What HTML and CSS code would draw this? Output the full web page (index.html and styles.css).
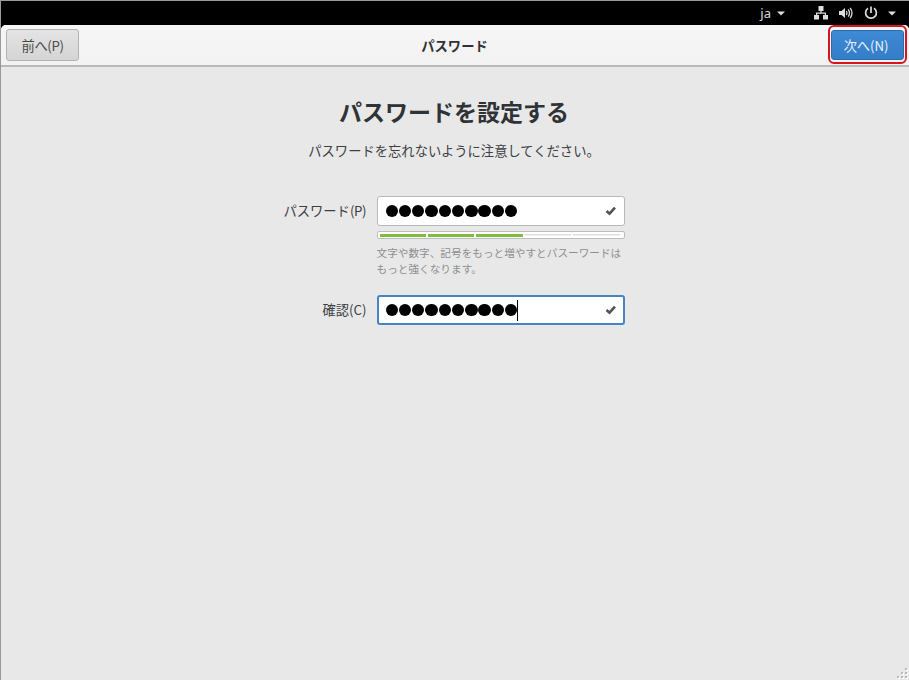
FILE: index.html
```html
<!DOCTYPE html>
<html lang="ja">
<head>
<meta charset="utf-8">
<title>パスワード</title>
<link rel="stylesheet" href="styles.css">
</head>
<body>
<div class="screen">
  <div class="topbar">
    <span class="lang">ja</span>
    <svg class="arrow" width="8" height="5" viewBox="0 0 8 5"><path d="M0 .5h8L4 4.500z"/></svg>
    <svg class="network" width="14" height="14" viewBox="0 0 14 14"><path d="M4.500 0h5v5H7.600v1.500H12V9h2v4.500H9V9h1.800V7.700H3.200V9H5v4.500H0V9h2V6.500h4.400V5H4.500z"/></svg>
    <svg class="volume" width="14" height="14" viewBox="0 0 14 14"><path d="M0 5h2.500L6 2v10L2.500 9H0z"/><path class="wave" d="M7.300 5q1.300 2 0 4M9.200 3.300q2.600 3.700 0 7.400M11.200 1.800q3.600 5.200 0 10.400"/></svg>
    <svg class="power" width="14" height="14" viewBox="0 0 14 14"><path d="M4 2.300a5.400 5.400 0 1 0 6 0M7 .5V7"/></svg>
    <svg class="arrow" width="8" height="5" viewBox="0 0 8 5"><path d="M0 .5h8L4 4.500z"/></svg>
  </div>
  <div class="window">
    <header class="header">
      <button class="button">前へ(P)</button>
      <div class="title">パスワード</div>
      <div class="highlight"><button class="button primary">次へ(N)</button></div>
    </header>
    <main class="content">
      <h1>パスワードを設定する</h1>
      <p class="subtitle">パスワードを忘れないように注意してください。</p>
      <div class="form">
        <label>パスワード<span class="latin">(P)</span></label>
        <div class="entry">
          <span class="dots"><i></i><i></i><i></i><i></i><i></i><i></i><i></i><i></i><i></i><i></i></span>
          <svg class="check" width="12" height="10" viewBox="0 0 12 10"><path d="M1.500 5l3 2.700L10 1.700"/></svg>
        </div>
        <div class="strength"><i class="on"></i><i class="on"></i><i class="on"></i><i></i><i></i></div>
        <p class="hint">文字や数字、記号をもっと増やすとパスーワードは<br>もっと強くなります。</p>
        <label class="confirm">確認(C)</label>
        <div class="entry confirm focused">
          <span class="dots"><i></i><i></i><i></i><i></i><i></i><i></i><i></i><i></i><i></i><i></i></span><span class="caret"></span>
          <svg class="check" width="12" height="10" viewBox="0 0 12 10"><path d="M1.500 5l3 2.700L10 1.700"/></svg>
        </div>
      </div>
    </main>
    <svg class="grip" width="12" height="12" viewBox="0 0 12 12"><path class="light" d="M9 1h2v2H9zM5 5h2v2H5zM9 5h2v2H9zM1 9h2v2H1zM5 9h2v2H5zM9 9h2v2H9z"/><path d="M8 0h2v2H8zM4 4h2v2H4zM8 4h2v2H8zM0 8h2v2H0zM4 8h2v2H4zM8 8h2v2H8z"/></svg>
  </div>
</div>
</body>
</html>
```
FILE: styles.css
```css
* { box-sizing: border-box; }
body {
  margin: 0;
  font: 13.300px/20px "Noto Sans CJK JP", sans-serif;
  color: #3c4043;
}
.screen {
  width: 909px;
  height: 680px;
  display: flex;
  flex-direction: column;
  background: #000;
  border-top: 1px solid #999;
  border-left: 1px solid #999;
  overflow: hidden;
}
.topbar {
  height: 24px;
  display: flex;
  align-items: center;
  justify-content: flex-end;
  padding-right: 13px;
  color: #ddd;
  fill: #ddd;
}
.lang { margin-right: 6px; font-family: "Noto Sans", sans-serif; font-size: 13px; }
.network { margin-left: 29px; }
.volume { margin-left: 11px; }
.power { margin-left: 11px; margin-right: 10px; }
.wave, .power { fill: none; stroke: #ddd; }
.wave { stroke-width: 1.300; }
.power { stroke-width: 1.700; }
.window {
  position: relative;
  flex: 1;
  background: #e8e8e8;
  border-radius: 5px 5px 0 0;
  overflow: hidden;
}
.header {
  height: 42px;
  display: grid;
  grid-template-columns: 85px 1fr 85px;
  align-items: start;
  padding: 0 2px 0 5px;
  background: linear-gradient(#f6f6f6, #f2f2f2);
  border-bottom: 2px solid #b8b8b8;
}
.title {
  text-align: center;
  font-weight: 700;
  line-height: 41px;
  color: #303335;
  padding-right: 4px;
}
.button {
  width: 73px;
  height: 32px;
  margin-top: 4px;
  padding: 2px 0 0;
  font: inherit;
  font-size: 13.300px;
  letter-spacing: -.4px;
  color: #4a4a4a;
  background: linear-gradient(#e4e4e4, #d5d5d5);
  border: 1px solid #b2b2b2;
  border-radius: 3px;
}
.highlight {
  justify-self: end;
  width: 79px;
  height: 39px;
  padding: 3px 1px 2px;
  border: 2px solid #d7141f;
  border-radius: 6px;
}
.primary {
  display: block;
  width: 73px;
  height: 30px;
  margin: 0;
  padding: 1px 3px 0 0;
  letter-spacing: -.1px;
  color: #e6f1fb;
  background: linear-gradient(#3f8ad4, #347dc9);
  border-color: #286cac;
}
.content { display: flex; flex-direction: column; align-items: center; padding-right: 2px; }
h1 {
  margin: 26px 0 0;
  font-size: 23px;
  line-height: 36px;
  color: #303335;
}
.subtitle { margin: 12px 0 0; }
.form {
  display: grid;
  grid-template-columns: 83px 248px;
  column-gap: 10px;
  margin-top: 35px;
}
label {
  justify-self: end;
  line-height: 30px;
  white-space: nowrap;
}
.latin { letter-spacing: -.4px; margin-right: .4px; }
.entry {
  display: flex;
  align-items: center;
  height: 30px;
  padding: 0 7px 0 8px;
  background: #fff;
  border: 1px solid #b8b8b6;
  border-radius: 3px;
}
.dots { display: flex; gap: .900px; }
.dots i { width: 12.400px; height: 12.400px; border-radius: 50%; background: #000; }
.check { margin-left: auto; fill: none; stroke: #50555a; stroke-width: 2.600; }
.strength {
  grid-column: 2;
  display: flex;
  gap: 2px;
  height: 8px;
  margin-top: 5px;
  padding: 2px 4px 2px 2px;
  background: #fff;
  border: 1px solid #bdbdbb;
  border-radius: 2px;
}
.strength i { flex: 1; height: 2px; border-top: 1px solid #ddd; border-bottom: 1px solid #eee; }
.strength .on { height: 3px; border: 0; background: #81bd43; }
.hint {
  grid-column: 2;
  margin: 6px 0 0;
  font-size: 10.650px;
  line-height: 16px;
  white-space: nowrap;
  color: #8d8f8f;
}
.confirm { margin-top: 18px; }
.focused { border: 2px solid #4585c3; padding: 0 6px 0 7px; }
.caret { width: 1px; height: 21px; background: #000; }
.grip { position: absolute; right: 0; bottom: 0; fill: #bbb; }
.light { fill: #fff; }
```
